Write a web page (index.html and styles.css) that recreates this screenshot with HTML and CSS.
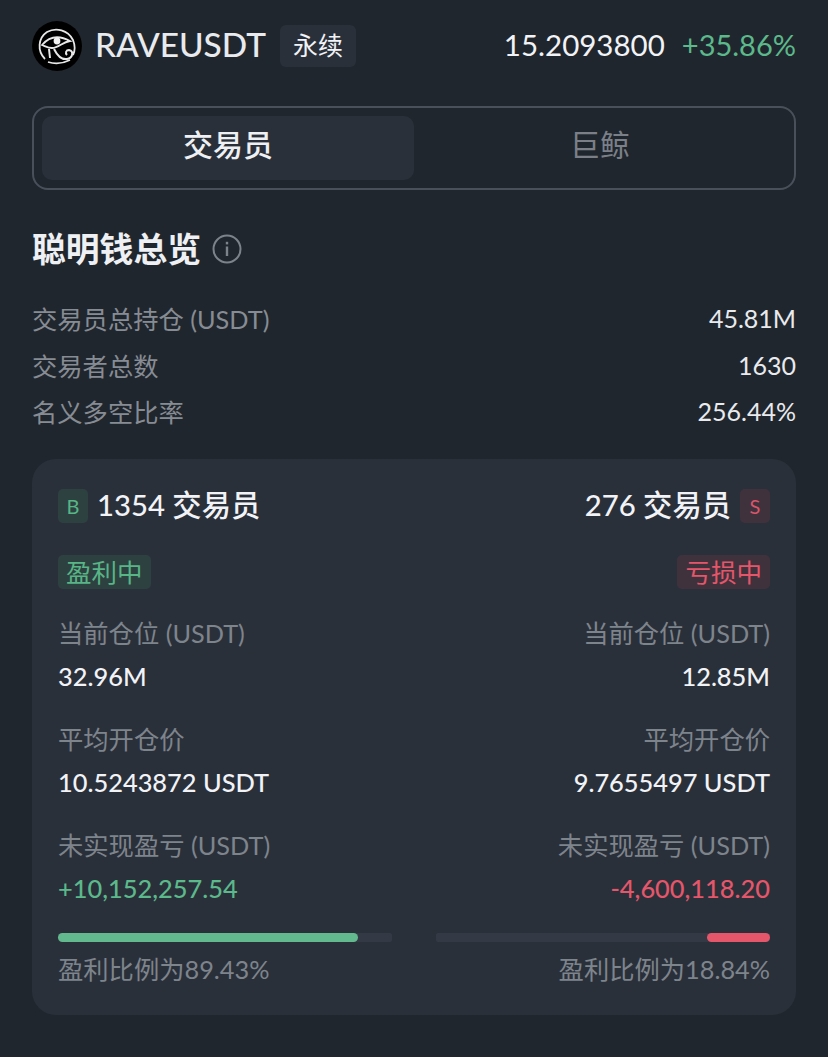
FILE: index.html
```html
<!DOCTYPE html>
<html lang="zh">
<head>
<meta charset="utf-8">
<title>RAVEUSDT</title>
<link rel="stylesheet" href="styles.css">
</head>
<body>
<main class="page">
  <header class="head">
    <svg class="logo" viewBox="0 0 50 50" aria-hidden="true">
      <circle cx="25" cy="25" r="25" fill="#000"/>
      <path d="M13 38C5 30 6 17 15 11C24 6 36 9 41 19C43 24 43 30 41 34" fill="none" stroke="#e8e8e8" stroke-width="1.8"/>
      <path d="M10 24C16 17 25 13 38 20C30 21 27 27 20 27C16 27 13 25 10 24Z" fill="none" stroke="#e8e8e8" stroke-width="1.8"/>
      <circle cx="25" cy="20" r="3.4" fill="#f2f2f2"/>
      <path d="M17 28L18 37M22 28C25 34 29 39 35 38C41 37 42 30 37 29C34 29 33 32 35 34" fill="none" stroke="#e8e8e8" stroke-width="2"/>
      <path d="M16 41C22 43 30 43 38 39" fill="none" stroke="#e8e8e8" stroke-width="1.6"/>
    </svg>
    <span class="symbol">RAVEUSDT</span>
    <span class="tag">永续</span>
    <span class="price">15.2093800</span>
    <span class="change up">+35.86%</span>
  </header>

  <nav class="tabs">
    <div class="tab active">交易员</div>
    <div class="tab">巨鲸</div>
  </nav>

  <h1 class="title"><span class="title-text">聪明钱总览</span>
    <svg class="info" viewBox="0 0 30 30" aria-hidden="true">
      <circle cx="15" cy="15" r="13.5" fill="none" stroke="#7d838b" stroke-width="2"/>
      <rect x="13.8" y="12.5" width="2.4" height="9.5" fill="#7d838b"/>
      <rect x="13.8" y="7.8" width="2.4" height="2.6" fill="#7d838b"/>
    </svg>
  </h1>

  <dl class="stats">
    <div class="stat"><dt>交易员总持仓 (USDT)</dt><dd>45.81M</dd></div>
    <div class="stat"><dt>交易者总数</dt><dd>1630</dd></div>
    <div class="stat"><dt>名义多空比率</dt><dd>256.44%</dd></div>
  </dl>

  <section class="card">
    <div class="col">
      <div class="count"><span class="badge badge-up">B</span><span class="count-text">1354 交易员</span></div>
      <span class="state state-up">盈利中</span>
      <div class="item"><span class="label">当前仓位 (USDT)</span><span class="value">32.96M</span></div>
      <div class="item"><span class="label">平均开仓价</span><span class="value">10.5243872 USDT</span></div>
      <div class="item"><span class="label">未实现盈亏 (USDT)</span><span class="value value-up">+10,152,257.54</span></div>
      <div class="bar"><div class="fill fill-up"></div></div>
      <div class="ratio">盈利比例为89.43%</div>
    </div>
    <div class="col col-right">
      <div class="count"><span class="count-text">276 交易员</span><span class="badge badge-down">S</span></div>
      <span class="state state-down">亏损中</span>
      <div class="item"><span class="label">当前仓位 (USDT)</span><span class="value">12.85M</span></div>
      <div class="item"><span class="label">平均开仓价</span><span class="value">9.7655497 USDT</span></div>
      <div class="item"><span class="label">未实现盈亏 (USDT)</span><span class="value value-down">-4,600,118.20</span></div>
      <div class="bar bar-right"><div class="fill fill-down"></div></div>
      <div class="ratio">盈利比例为18.84%</div>
    </div>
  </section>

  <div class="next">100</div>
</main>
</body>
</html>
```
FILE: styles.css
```css
* { box-sizing: border-box; }
html, body { margin: 0; height: 100%; }
body {
  background: #20262d;
  color: #f1f3f6;
  font-family: "Lato", "Noto Sans CJK SC", sans-serif;
  overflow: hidden;
}
.page { padding: 21px 32px 0; }
.head { display: flex; align-items: center; height: 50px; }
.logo { width: 50px; height: 50px; flex: none; }
.symbol { margin-left: 13px; padding-bottom: 4px; font-size: 33.4px; font-weight: 500; color: #e8eaed; }
.tag {
  margin-left: 14px;
  height: 42px;
  width: 76px;
  padding-bottom: 4px;
  display: flex;
  align-items: center;
  justify-content: center;
  background: #2a303a;
  border-radius: 6px;
  font-size: 25px;
}
.price { margin-left: auto; padding-bottom: 4px; font-size: 29.5px; }
.change { margin-left: 17px; padding-bottom: 4px; font-size: 29px; }
.up { color: #5bb98b; }
.tabs {
  margin-top: 35px;
  height: 84px;
  padding: 8px;
  display: flex;
  border: 2px solid #4a505a;
  border-radius: 16px;
}
.tab {
  flex: 1;
  padding-bottom: 10px;
  display: flex;
  align-items: center;
  justify-content: center;
  border-radius: 10px;
  font-size: 30px;
  color: #7b8088;
}
.tab.active { background: #2a303a; color: #eef0f3; font-weight: 500; }
.title {
  margin: 35px 0 0;
  height: 48px;
  display: flex;
  align-items: center;
  gap: 11px;
  font-size: 33.8px;
  font-weight: 700;
  color: #eef0f3;
}
.title-text { margin-bottom: 4px; }
.info { width: 30px; height: 30px; }
.stats { margin: 22px 0 0; }
.stat {
  display: flex;
  justify-content: space-between;
  align-items: center;
  height: 46.5px;
  font-size: 25.3px;
}
.stat dt { color: #878c94; }
.stat dd { margin: 0; color: #e8eaed; font-size: 25px; }
.card {
  margin-top: 24px;
  height: 556px;
  padding: 26px;
  display: grid;
  grid-template-columns: 334px 334px;
  justify-content: space-between;
  background: #2a303a;
  border-radius: 24px;
}
.col { display: flex; flex-direction: column; align-items: flex-start; }
.col-right { align-items: flex-end; text-align: right; }
.count { display: flex; align-items: center; gap: 9px; height: 40px; font-size: 29.3px; font-weight: 500; }
.count-text { padding-bottom: 4px; }
.badge {
  width: 30px;
  height: 34px;
  margin-top: 2px;
  display: flex;
  align-items: center;
  justify-content: center;
  border-radius: 5px;
  font-size: 20px;
  font-weight: 400;
}
.badge-up { background: #2e4141; color: #57b586; }
.badge-down { background: #40323d; color: #d9566a; }
.state {
  margin-top: 30px;
  height: 34px;
  padding: 0 8px 2px;
  display: flex;
  align-items: center;
  border-radius: 5px;
  font-size: 25.5px;
}
.state-up { background: #2e4141; color: #57b586; }
.state-down { background: #40323d; color: #e5566b; }
.item { margin-top: 26px; display: flex; flex-direction: column; }
.item + .item { margin-top: 28px; }
.col-right .item { align-items: flex-end; }
.label { font-size: 25.3px; line-height: 36px; color: #7e848c; }
.value { margin-top: 8px; font-size: 25.4px; line-height: 34px; font-weight: 500; color: #f1f3f6; }
.value-up { color: #5bb98b; }
.value-down { color: #e5566b; }
.bar { margin-top: 28px; width: 100%; height: 9px; background: #343a45; border-radius: 2px; }
.bar-right { display: flex; justify-content: flex-end; }
.fill { height: 9px; border-radius: 5px; }
.fill-up { width: 300px; background: #63b98e; }
.fill-down { width: 63px; background: #e5566b; }
.ratio { margin-top: 9px; font-size: 25.3px; line-height: 36px; color: #7e848c; }
.next { margin-top: 32px; padding-left: 16px; font-size: 25px; line-height: 36px; color: #7e848c; }
```
